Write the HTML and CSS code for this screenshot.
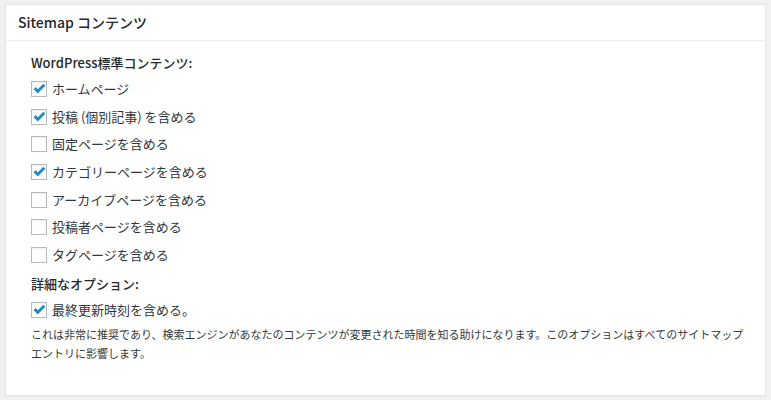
FILE: index.html
```html
<!DOCTYPE html>
<html lang="ja">
<head>
  <meta charset="UTF-8" />
  <meta name="viewport" content="width=device-width, initial-scale=1.0"/>
  <title>Sitemap コンテンツ</title>
  <link rel="stylesheet" href="styles.css">
</head>
<body>
  <div class="postbox">
    <h2 class="hndle">Sitemap コンテンツ</h2>

    <div class="inside">
      <!-- Standard content -->
      <h4>WordPress標準コンテンツ:</h4>
      <ul class="options">
        <li><label><input type="checkbox" checked /><span class="box"></span>ホームページ</label></li>
        <li><label><input type="checkbox" checked /><span class="box"></span>投稿 (個別記事) を含める</label></li>
        <li><label><input type="checkbox" /><span class="box"></span>固定ページを含める</label></li>
        <li><label><input type="checkbox" checked /><span class="box"></span>カテゴリーページを含める</label></li>
        <li><label><input type="checkbox" /><span class="box"></span>アーカイブページを含める</label></li>
        <li><label><input type="checkbox" /><span class="box"></span>投稿者ページを含める</label></li>
        <li><label><input type="checkbox" /><span class="box"></span>タグページを含める</label></li>
      </ul>

      <!-- Advanced options -->
      <h4 class="advanced">詳細なオプション:</h4>
      <ul class="options">
        <li><label><input type="checkbox" checked /><span class="box"></span>最終更新時刻を含める。</label></li>
      </ul>
      <p class="description">これは非常に推奨であり、検索エンジンがあなたのコンテンツが変更された時間を知る助けになります。このオプションはすべてのサイトマップエントリに影響します。</p>
    </div>
  </div>
</body>
</html>
```

FILE: styles.css
```css
html, body {
  margin: 0;
  padding: 0;
  height: 100%;
  background: #f1f1f1;
  font-family: "Noto Sans CJK JP", "Noto Sans", sans-serif;
  color: #32373c;
}

body {
  box-sizing: border-box;
  padding: 4px 5px 4px;
  display: flex;
}

.postbox {
  flex: 1;
  background: #fff;
  border: 1px solid #e5e5e5;
  box-shadow: 0 1px 1px rgba(0, 0, 0, 0.04);
}

.hndle {
  margin: 0;
  padding: 7px 12px 7px;
  font-size: 14px;
  line-height: 21px;
  font-weight: 500;
  color: #23282d;
  border-bottom: 1px solid #eee;
}

.inside {
  padding: 12px 12px 12px 25px;
}

h4 {
  margin: 0;
  font-size: 13px;
  line-height: 20px;
  font-weight: 500;
  color: #23282d;
}

.advanced {
  margin-top: 5px;
}

.options {
  list-style: none;
  margin: 2px 0 0;
  padding: 0;
}

.options li {
  height: 27.7px;
  display: flex;
  align-items: center;
}

.options label {
  display: flex;
  align-items: center;
  font-size: 13px;
  line-height: 20px;
  cursor: pointer;
}

.options input {
  display: none;
}

.box {
  width: 14px;
  height: 14px;
  margin-right: 5px;
  border: 1px solid #b4b9be;
  background: #fff;
  box-shadow: inset 0 1px 2px rgba(0, 0, 0, 0.07);
  display: inline-flex;
  align-items: center;
  justify-content: center;
  flex-shrink: 0;
}

.options input:checked + .box::before {
  content: "";
  width: 14px;
  height: 14px;
  background: url("data:image/svg+xml;utf8,<svg xmlns='http://www.w3.org/2000/svg' viewBox='0 0 14 14'><path d='M1.6 7.2 L3.7 5.1 L5.8 7.3 L11.3 1.7 L13.3 3.8 L5.8 11.4 Z' fill='%231e8cbe'/></svg>") no-repeat center;
}

.description {
  margin: 1px 0 0;
  font-size: 11px;
  line-height: 19px;
}
```
